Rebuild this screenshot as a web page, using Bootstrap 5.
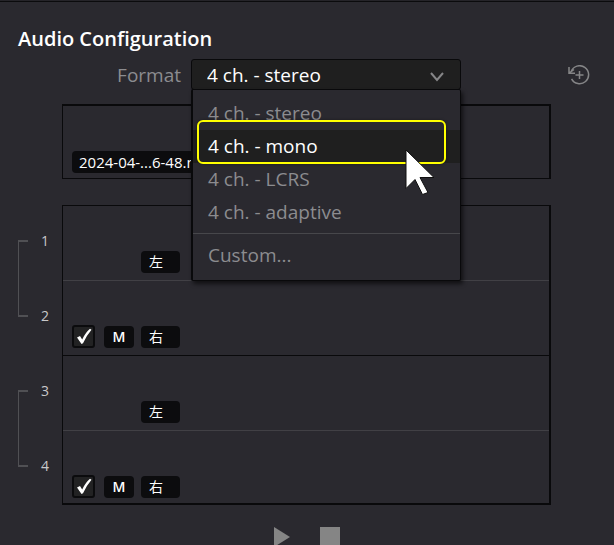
<!DOCTYPE html>
<html lang="en" data-bs-theme="dark">
<head>
<meta charset="utf-8">
<meta name="viewport" content="width=device-width, initial-scale=1">
<title>Audio Configuration</title>
<link href="https://cdn.jsdelivr.net/npm/bootstrap@5.3.0/dist/css/bootstrap.min.css" rel="stylesheet">
<style>
  body { background: #2a292f; color: #fff; font-family: "Open Sans", "Noto Sans CJK SC", sans-serif; font-size: 19px; line-height: 30px; }
  .panel { border-top: 1px solid #252429; box-shadow: inset 0 1px #0b0b0d; padding-top: 23px; }
  .panel-title { font-size: 20px; line-height: 30px; font-weight: 600; padding-left: 18px; }
  .format-row { padding-right: 24px; margin-top: 5px; }
  .format-label { width: 191px; padding-right: 10px; text-align: right; color: #8c8c8f; }
  .format-picker { width: 270px; }
  .format-select { appearance: none; width: 100%; height: 31px; padding: 0 15px; line-height: 28px; background: #1f1f1f; color: #fff; border: 1px solid #09090b; border-radius: 3px; }
  .chevron { right: 17px; top: 12px; pointer-events: none; }
  .format-menu { top: 30px; left: 0; right: 0; padding: 7px 0 8px; margin: 0; background: #2a292f; border: 1px solid #09090b; border-left-width: 2px; border-radius: 2px; box-shadow: 2px 3px 4px #0009; font-size: 19px; }
  .format-menu .dropdown-item { padding: 0 15px; line-height: 33px; color: #8c8c8f; }
  .format-menu .current { background: #1f1f1f; color: #fff; }
  .format-menu .dropdown-divider { margin: 4px 0 5px; border-color: #47474b; opacity: 1; }
  .callout { top: -10px; bottom: -1px; left: 4px; right: 14px; border: 2px solid #ff0; border-radius: 6px; background: linear-gradient(#2a292f 8px, #1f1f1f 8px); box-shadow: 0 0 3px #0006; }
  .pointer { left: 214px; top: 91px; z-index: 1010; pointer-events: none; }
  .reset { color: #858587; line-height: 1; }
  .body-pad { padding-right: 63px; }
  .gutter { width: 62px; flex: none; }
  .frame { border: 1px solid #09090b; border-right-width: 2px; }
  .source { height: 75px; margin: 14px 0 26px 62px; border-top-width: 2px; padding: 0 9px 5px; }
  .chip { height: 22px; padding: 0 7px; border: 0; border-radius: 4px; background: #0c0c0e; color: #fff; font-size: 15px; line-height: 22px; text-align: left; white-space: nowrap; }
  .tracks { border-bottom-width: 2px; }
  .track { height: 75px; padding: 0 9px 7px; border-bottom: 1px solid #414045; }
  .track:nth-child(2) { border-bottom-color: #09090b; }
  .track:last-child { border-bottom: 0; height: 72px; padding-bottom: 5px; }
  .mute { width: 30px; margin: 0 7px 0 9px; text-align: center; font-size: 14px; font-weight: 600; }
  .side { width: 39px; padding-left: 8px; font-size: 14px; }
  .only-side { margin-left: 69px; }
  .track-check { appearance: none; width: 23px; height: 23px; margin: 0; border: 2px solid #0b0b0d; border-radius: 3px; background: #222223; }
  .tick { left: 4px; top: 3px; pointer-events: none; }
  .pair { height: 150px; padding-left: 18px; }
  .bracket { width: 10px; height: 77px; margin-top: 35px; border: solid #505054; border-width: 2px 0 2px 1px; }
  .numbers { margin-left: 13px; font-size: 14px; line-height: 72px; color: #c8c8ca; }
  .numbers span { height: 75px; }
  .transport { margin-top: 22px; padding-left: 62px; gap: 30px; }
  .transport button { line-height: 0; }
</style>
<script src="https://cdn.jsdelivr.net/npm/bootstrap@5.3.0/dist/js/bootstrap.bundle.min.js"></script>
</head>
<body class="vh-100 overflow-hidden">
<main class="panel">
  <h1 class="panel-title m-0">Audio Configuration</h1>

  <div class="format-row d-flex align-items-center">
    <label class="format-label" for="format">Format</label>
    <div class="format-picker position-relative">
      <select class="format-select d-block" id="format">
        <option>4 ch. - stereo</option>
        <option>4 ch. - mono</option>
        <option>4 ch. - LCRS</option>
        <option>4 ch. - adaptive</option>
        <option>Custom...</option>
      </select>
      <svg class="chevron position-absolute" width="14" height="11" viewBox="0 0 14 11" fill="none" stroke="#858587" stroke-width="2" aria-hidden="true"><path d="M1 2l6 7 6-7"/></svg>
      <ul class="format-menu dropdown-menu show">
        <li><button type="button" class="dropdown-item">4 ch. - stereo</button></li>
        <li class="position-relative">
          <button type="button" class="dropdown-item current"><span class="callout position-absolute"></span><span class="position-relative">4 ch. - mono</span></button>
        </li>
        <li><button type="button" class="dropdown-item">4 ch. - LCRS</button></li>
        <li><button type="button" class="dropdown-item">4 ch. - adaptive</button></li>
        <li><hr class="dropdown-divider"></li>
        <li><button type="button" class="dropdown-item">Custom...</button></li>
      </ul>
      <svg class="pointer position-absolute" width="30" height="46" viewBox="0 0 30 46" aria-hidden="true">
        <path d="M1 0V38.500L10 29.500L17.500 44.500L23 42.500L15 27.500H29Z" fill="#fff" stroke="#111" stroke-width="1"/>
      </svg>
    </div>
    <button type="button" class="reset btn p-0 border-0 ms-auto" aria-label="Reset">
      <svg class="d-block" width="22" height="20" viewBox="0 0 22 20" fill="none" stroke="currentColor" stroke-width="1.500"><path d="M3.200 6.600A9 9 0 1 1 3.600 13.800"/><path d="M1 2v6.200h6M1.200 8L6 4.500M11.500 6v8M7.500 10h8"/></svg>
    </button>
  </div>

  <div class="body-pad">
    <div class="source frame d-flex align-items-end">
      <button type="button" class="chip">2024-04-...6-48.mov</button>
    </div>

    <div class="d-flex">
      <div class="gutter">
        <div class="pair d-flex">
          <div class="bracket"></div>
          <div class="numbers d-flex flex-column"><span>1</span><span>2</span></div>
        </div>
        <div class="pair d-flex">
          <div class="bracket"></div>
          <div class="numbers d-flex flex-column"><span>3</span><span>4</span></div>
        </div>
      </div>
      <div class="tracks frame flex-grow-1">
        <div class="track d-flex align-items-end">
          <button type="button" class="chip side only-side">左</button>
        </div>
        <div class="track d-flex align-items-end">
          <div class="position-relative d-flex">
            <input type="checkbox" class="track-check" checked aria-label="Enable tracks 1 and 2">
            <svg class="tick position-absolute" width="17" height="17" viewBox="0 0 17 17" aria-hidden="true"><path d="M1 9.500l3-1.500 2.200 3.500Q9.500 4.500 14 .8l1.500.9Q10.500 7.500 7 15.200L5.500 16Z" fill="#fff"/></svg>
          </div>
          <button type="button" class="chip mute">M</button>
          <button type="button" class="chip side">右</button>
        </div>
        <div class="track d-flex align-items-end">
          <button type="button" class="chip side only-side">左</button>
        </div>
        <div class="track d-flex align-items-end">
          <div class="position-relative d-flex">
            <input type="checkbox" class="track-check" checked aria-label="Enable tracks 3 and 4">
            <svg class="tick position-absolute" width="17" height="17" viewBox="0 0 17 17" aria-hidden="true"><path d="M1 9.500l3-1.500 2.200 3.500Q9.500 4.500 14 .8l1.500.9Q10.500 7.500 7 15.200L5.500 16Z" fill="#fff"/></svg>
          </div>
          <button type="button" class="chip mute">M</button>
          <button type="button" class="chip side">右</button>
        </div>
      </div>
    </div>

    <div class="transport d-flex justify-content-center">
      <button type="button" class="btn p-0 border-0" aria-label="Play"><svg width="16" height="20" viewBox="0 0 16 20"><path d="M0 0L16 10L0 20Z" fill="#858585"/></svg></button>
      <button type="button" class="btn p-0 border-0" aria-label="Stop"><svg width="20" height="20" viewBox="0 0 20 20"><path d="M0 0H20V20H0Z" fill="#858585"/></svg></button>
    </div>
  </div>
</main>
</body>
</html>
